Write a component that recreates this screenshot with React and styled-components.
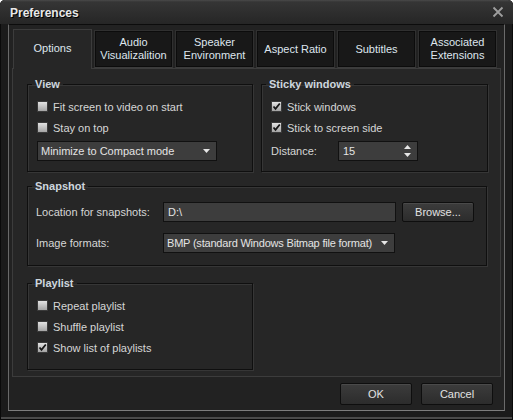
import React from 'react'
import styled, { createGlobalStyle } from 'styled-components'

const GlobalStyle = createGlobalStyle`
  html, body {
    margin: 0;
    padding: 0;
    background: #ffffff;
  }
  body {
    font-family: "Liberation Sans", Arial, sans-serif;
    font-size: 11px;
    color: #d4d4d4;
  }
`;

const tabs = [
  ['Options'],
  ['Audio', 'Visualizalition'],
  ['Speaker', 'Environment'],
  ['Aspect Ratio'],
  ['Subtitles'],
  ['Associated', 'Extensions'],
];

const Arrow = ({ up }) => (
  <svg width="7" height="4" viewBox="0 0 7 4">
    <polygon points={up ? '0,4 7,4 3.5,0' : '0,0 7,0 3.5,4'} fill="#e6e6e6" />
  </svg>
);

const Check = () => (
  <svg width="9" height="9" viewBox="0 0 9 9">
    <polyline points="1.5,4.5 3.5,6.8 7.8,1.5" fill="none" stroke="#161616" strokeWidth="1.8" />
  </svg>
);

const CheckRow = ({ checked, children }) => (
  <Row>
    <Box>{checked && <Check />}</Box>
    <span>{children}</span>
  </Row>
);

const App = () => {
  return (
    <>
      <GlobalStyle />
      <Window>
        <TitleBar>
          <Title>Preferences</Title>
          <svg width="12" height="12" viewBox="0 0 12 12">
            <path d="M1.5 1.5 L10.5 10.5 M10.5 1.5 L1.5 10.5" stroke="#9e9e9e" strokeWidth="1.8" />
          </svg>
        </TitleBar>
        <Client>
          <TabRow>
            {tabs.map((lines, i) => (
              <Tab key={i} $active={i === 0}>
                <div>
                  {lines.map((l) => (
                    <div key={l}>{l}</div>
                  ))}
                </div>
              </Tab>
            ))}
          </TabRow>
          <Panel>
            <TopRow>
              <Group>
                <Legend>View</Legend>
                <GroupBody>
                  <CheckRow>Fit screen to video on start</CheckRow>
                  <CheckRow>Stay on top</CheckRow>
                  <Select $width={180} $top={3}>
                    <span>Minimize to Compact mode</span>
                    <Arrow />
                  </Select>
                </GroupBody>
              </Group>
              <Group>
                <Legend>Sticky windows</Legend>
                <GroupBody>
                  <CheckRow checked>Stick windows</CheckRow>
                  <CheckRow checked>Stick to screen side</CheckRow>
                  <FieldRow $top={3}>
                    <Label $width={67}>Distance:</Label>
                    <Spin>
                      <span>15</span>
                      <SpinArrows>
                        <Arrow up />
                        <Arrow />
                      </SpinArrows>
                    </Spin>
                  </FieldRow>
                </GroupBody>
              </Group>
            </TopRow>
            <Group $top={7}>
              <Legend>Snapshot</Legend>
              <SnapBody>
                <FieldRow>
                  <Label $width={127}>Location for snapshots:</Label>
                  <TextInput>D:\</TextInput>
                  <Button $w={72} $h={20}>Browse...</Button>
                </FieldRow>
                <FieldRow>
                  <Label $width={127}>Image formats:</Label>
                  <Select $width={232}>
                    <SelectText $tight>BMP (standard Windows Bitmap file format)</SelectText>
                    <Arrow />
                  </Select>
                </FieldRow>
              </SnapBody>
            </Group>
            <Group $top={10} $width={226}>
              <Legend>Playlist</Legend>
              <GroupBody $bottom={11}>
                <CheckRow>Repeat playlist</CheckRow>
                <CheckRow>Shuffle playlist</CheckRow>
                <CheckRow checked>Show list of playlists</CheckRow>
              </GroupBody>
            </Group>
          </Panel>
          <Footer>
            <Button $w={72} $h={22}>OK</Button>
            <Button $w={72} $h={22}>Cancel</Button>
          </Footer>
        </Client>
      </Window>
    </>
  )
}

const Window = styled.div`
  width: 513px;
  height: 420px;
  box-sizing: border-box;
  display: flex;
  flex-direction: column;
  background: #1b1b1b;
  border-radius: 5px 5px 0 0;
  box-shadow: inset 0 0 0 1px #0a0a0a, inset 0 -3px 0 #4a4a4a;
  overflow: hidden;
`;

const TitleBar = styled.div`
  height: 24px;
  flex: none;
  display: flex;
  align-items: center;
  justify-content: space-between;
  padding: 0 9px 0 10px;
  background: linear-gradient(#4a4a4a 0, #353535 2px, #262626 100%);
`;

const Title = styled.div`
  font-size: 12px;
  font-weight: bold;
  color: #e8e8e8;
  text-shadow: 1px 1px 0 #000;
  padding-top: 2px;
`;

const Client = styled.div`
  height: 387px;
  flex: none;
  margin: 0 8px 0 8px;
  box-sizing: border-box;
  display: flex;
  flex-direction: column;
  padding: 4px 3px 0 3px;
  background: #222222;
  border: 1px solid;
  border-color: #0c0c0c #6a6a6a #7c7c7c #6a6a6a;
`;

const TabRow = styled.div`
  display: flex;
  align-items: flex-end;
  gap: 2px;
  padding-left: 1px;
  position: relative;
  z-index: 1;
`;

const Tab = styled.div`
  width: 79px;
  height: ${(p) => (p.$active ? 40 : 38)}px;
  margin-bottom: ${(p) => (p.$active ? -1 : 0)}px;
  box-sizing: border-box;
  display: flex;
  align-items: center;
  justify-content: center;
  text-align: center;
  line-height: 13px;
  color: #dfe6ee;
  background: ${(p) => (p.$active ? '#262626' : '#181818')};
  border: 1px solid ${(p) => (p.$active ? '#3c3c3c' : '#303030')};
  border-bottom: ${(p) => (p.$active ? 'none' : '1px solid #3c3c3c')};
  box-shadow: ${(p) => (p.$active ? 'none' : 'inset 0 0 0 1px #0c0c0c')};
  padding-bottom: ${(p) => (p.$active ? 2 : 0)}px;
`;

const Panel = styled.div`
  height: 309px;
  flex: none;
  box-sizing: border-box;
  background: #262626;
  border: 1px solid #3c3c3c;
  padding: 8px 13px 0 14px;
`;

const TopRow = styled.div`
  display: grid;
  grid-template-columns: 226px 227px;
  gap: 8px;
`;

const Group = styled.fieldset`
  margin: ${(p) => p.$top || 0}px 0 0 0;
  padding: 0;
  min-width: 0;
  width: ${(p) => (p.$width ? `${p.$width}px` : 'auto')};
  box-sizing: border-box;
  border: 1px solid #0f0f0f;
  box-shadow: 1px 1px 0 #363636, inset 1px 1px 0 #363636;
`;

const Legend = styled.legend`
  margin-left: 4px;
  padding: 0 3px;
  font-weight: bold;
  line-height: 14px;
  color: #cdd6de;
`;

const GroupBody = styled.div`
  display: flex;
  flex-direction: column;
  padding: 5px 9px ${(p) => p.$bottom || 10}px 9px;
`;

const SnapBody = styled.div`
  display: flex;
  flex-direction: column;
  gap: 11px;
  padding: 9px 8px 12px 8px;
`;

const Row = styled.div`
  height: 21px;
  display: flex;
  align-items: center;
  gap: 5px;
  color: #d6d6d6;
`;

const Box = styled.div`
  width: 11px;
  height: 11px;
  box-sizing: border-box;
  flex: none;
  display: flex;
  align-items: center;
  justify-content: center;
  border: 1px solid #3a3a3a;
  background: linear-gradient(#e2e2e2, #a4a4a4);
`;

const FieldRow = styled.div`
  display: flex;
  align-items: center;
  height: 20px;
  margin-top: ${(p) => p.$top || 0}px;
`;

const Label = styled.div`
  width: ${(p) => p.$width}px;
  flex: none;
  color: #d6d6d6;
`;

const Field = styled.div`
  height: 20px;
  box-sizing: border-box;
  display: flex;
  align-items: center;
  background: #3d3d3d;
  border: 1px solid #111111;
  color: #e4e4e4;
`;

const Select = styled(Field)`
  width: ${(p) => p.$width}px;
  margin-top: ${(p) => p.$top || 0}px;
  justify-content: space-between;
  padding: 0 6px 0 3px;
`;

const SelectText = styled.span`
  white-space: nowrap;
  letter-spacing: ${(p) => (p.$tight ? '-0.2px' : 'normal')};
`;

const TextInput = styled(Field)`
  width: 233px;
  padding-left: 4px;
`;

const Spin = styled(Field)`
  width: 80px;
  justify-content: space-between;
  padding: 0 6px 0 4px;
`;

const SpinArrows = styled.div`
  display: flex;
  flex-direction: column;
  gap: 4px;
`;

const Button = styled.div`
  width: ${(p) => p.$w}px;
  height: ${(p) => p.$h}px;
  margin-left: 6px;
  box-sizing: border-box;
  display: flex;
  align-items: center;
  justify-content: center;
  color: #e2e2e2;
  border: 1px solid #0e0e0e;
  border-radius: 2px;
  background: linear-gradient(#3c3c3c, #2c2c2c);
  box-shadow: inset 0 1px 0 #4a4a4a;
`;

const Footer = styled.div`
  display: flex;
  justify-content: flex-end;
  gap: 3px;
  padding: 6px 8px 0 0;
`;

export default App;
